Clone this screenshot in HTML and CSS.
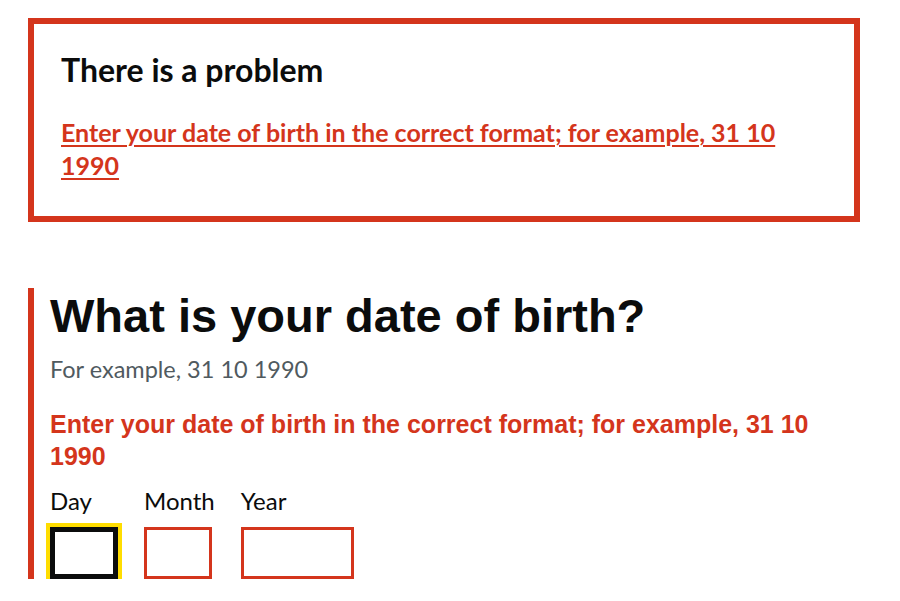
FILE: index.html
```html
<!DOCTYPE html>
<html lang="en">
<head>
<meta charset="utf-8">
<title>What is your date of birth?</title>
<link rel="stylesheet" href="styles.css">
</head>
<body>
<main class="page">
  <div class="error-summary" role="alert">
    <h2 class="error-summary__title">There is a problem</h2>
    <ul class="error-summary__list">
      <li><a class="error-summary__link" href="#dob-day">Enter your date of birth in the correct format; for example, 31 10 1990</a></li>
    </ul>
  </div>

  <div class="form-group form-group--error">
    <fieldset class="fieldset">
      <legend class="fieldset__legend"><h1 class="fieldset__heading">What is your date of birth?</h1></legend>
      <div class="hint">For example, 31 10 1990</div>
      <p class="error-message">Enter your date of birth in the correct format; for example, 31 10 1990</p>
      <div class="date-input">
        <div class="date-input__item">
          <label class="date-input__label" for="dob-day">Day</label>
          <input class="input input--w2 input--focus" id="dob-day" type="text">
        </div>
        <div class="date-input__item">
          <label class="date-input__label" for="dob-month">Month</label>
          <input class="input input--w2 input--error" id="dob-month" type="text">
        </div>
        <div class="date-input__item">
          <label class="date-input__label" for="dob-year">Year</label>
          <input class="input input--w4 input--error" id="dob-year" type="text">
        </div>
      </div>
    </fieldset>
  </div>
</main>
</body>
</html>
```
FILE: styles.css
```css
html, body {
  margin: 0;
  padding: 0;
  background: #ffffff;
}

.page {
  padding: 18px 0 0 28px;
  width: 832px;
  color: #0b0c0c;
}

.error-summary {
  box-sizing: border-box;
  width: 832px;
  border: 6px solid #d4351c;
  padding: 26px 26px 34px 27px;
  margin-bottom: 66px;
}

.error-summary__title {
  margin: 0 0 27px;
  font-family: "Lato", "Liberation Sans", sans-serif;
  font-weight: 700;
  font-size: 32px;
  line-height: 39px;
  color: #0b0c0c;
}

.error-summary__list {
  margin: 0;
  padding: 0;
  list-style: none;
}

.error-summary__link {
  font-family: "Lato", "Liberation Sans", sans-serif;
  font-weight: 700;
  font-size: 25px;
  line-height: 33px;
  color: #d4351c;
  text-decoration: underline;
  text-decoration-thickness: 1.5px;
  text-underline-offset: 3px;
}

.form-group--error {
  border-left: 6px solid #d4351c;
  padding-left: 16px;
}

.fieldset {
  margin: 0;
  padding: 0;
  border: 0;
  min-width: 0;
}

.fieldset__legend {
  padding: 0;
  display: block;
}

.fieldset__heading {
  margin: 2px 0 11px;
  font-family: "Liberation Sans", Arial, sans-serif;
  font-weight: 700;
  font-size: 47px;
  line-height: 52px;
  color: #0b0c0c;
}

.hint {
  font-family: "Lato", "Liberation Sans", sans-serif;
  font-size: 23.5px;
  line-height: 32px;
  color: #505a5f;
  margin-bottom: 23px;
}

.error-message {
  margin: 0 0 13px;
  font-family: "Liberation Sans", Arial, sans-serif;
  font-weight: 700;
  font-size: 25px;
  line-height: 32px;
  color: #d4351c;
}

.date-input {
  display: flex;
  gap: 26px;
}

.date-input__item {
  display: flex;
  flex-direction: column;
  align-items: flex-start;
}

.date-input__label {
  font-family: "Lato", "Liberation Sans", sans-serif;
  font-size: 24px;
  line-height: 32px;
  color: #0b0c0c;
  margin-bottom: 10px;
}

.input {
  box-sizing: border-box;
  height: 52px;
  margin: 0;
  padding: 6px;
  border: 3px solid #0b0c0c;
  border-radius: 0;
  background: #ffffff;
  font-family: "Lato", "Liberation Sans", sans-serif;
  font-size: 24px;
}

.input--w2 {
  width: 68px;
}

.input--w4 {
  width: 113px;
}

.input--error {
  border-color: #d4351c;
}

.input--focus {
  border-color: #0b0c0c;
  box-shadow: inset 0 0 0 2px #0b0c0c;
  outline: 4px solid #ffdd00;
  outline-offset: 0;
}
```
